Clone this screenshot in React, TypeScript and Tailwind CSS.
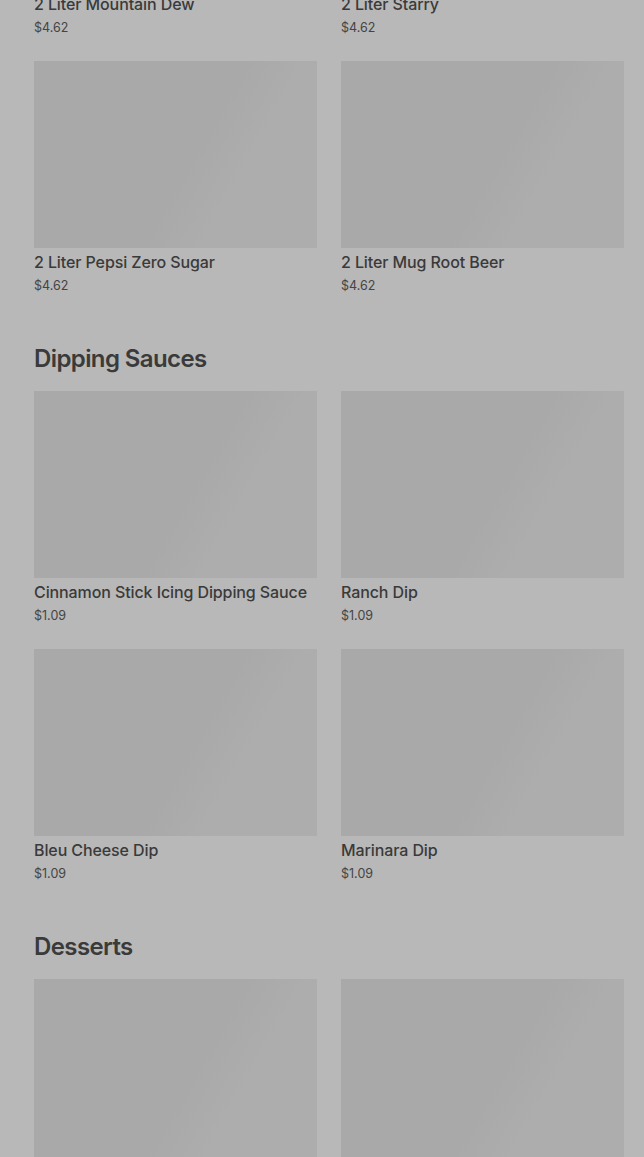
import React from 'react';

type Item = { name: string; price: string };

const sections: { title?: string; items: Item[] }[] = [
  {
    items: [
      { name: '2 Liter Mountain Dew', price: '$4.62' },
      { name: '2 Liter Starry', price: '$4.62' },
      { name: '2 Liter Pepsi Zero Sugar', price: '$4.62' },
      { name: '2 Liter Mug Root Beer', price: '$4.62' },
    ],
  },
  {
    title: 'Dipping Sauces',
    items: [
      { name: 'Cinnamon Stick Icing Dipping Sauce', price: '$1.09' },
      { name: 'Ranch Dip', price: '$1.09' },
      { name: 'Bleu Cheese Dip', price: '$1.09' },
      { name: 'Marinara Dip', price: '$1.09' },
    ],
  },
  {
    title: 'Desserts',
    items: [
      { name: 'Cinnamon Sticks', price: '$5.49' },
      { name: 'Chocolate Chip Cookie', price: '$6.99' },
    ],
  },
];

const ItemCard: React.FC<{ item: Item }> = ({ item }) => (
  <div className="flex flex-col">
    <div className="h-[187px] w-full bg-[linear-gradient(120deg,#a9a9a9_0%,#a9a9a9_55%,#adadad_70%,#adadad_100%)]" />
    <p className="mt-1 text-[16px] leading-5 font-medium tracking-[-0.1px] text-[#3a3a3a] truncate">{item.name}</p>
    <p className="mt-[5px] text-[12.5px] leading-[18px] text-[#444444]">{item.price}</p>
  </div>
);

const App: React.FC = () => {
  return (
    <div
      className="h-screen w-full overflow-hidden bg-[#b8b8b8]"
      style={{ fontFamily: 'Inter, "Noto Sans", sans-serif' }}
    >
      <div className="mt-[-197px] pl-[34px] pr-5">
        {sections.map((s, i) => (
          <section key={i} className={i > 0 ? 'pt-12' : ''}>
            {s.title && (
              <h2 className="mb-4 text-[24px] leading-8 font-semibold tracking-[-0.6px] text-[#3a3a3a]">{s.title}</h2>
            )}
            <div className="grid grid-cols-2 gap-x-6 gap-y-6">
              {s.items.map((it) => (
                <ItemCard key={it.name} item={it} />
              ))}
            </div>
          </section>
        ))}
      </div>
    </div>
  );
};

export default App;
